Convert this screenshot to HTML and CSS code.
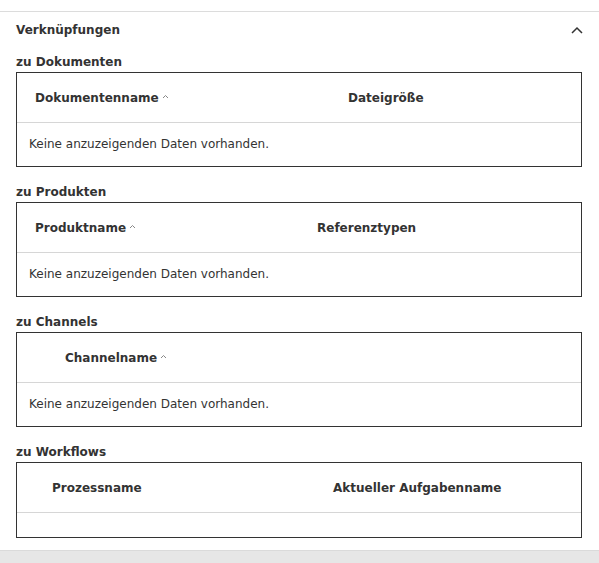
FILE: index.html
```html
<!DOCTYPE html>
<html lang="de">
<head>
<meta charset="utf-8">
<title>Verknüpfungen</title>
<link rel="stylesheet" href="styles.css">
</head>
<body>
<section class="panel">
  <div class="panel-header">
    <span class="panel-title">Verknüpfungen</span>
    <svg class="chevron" width="12" height="8" viewBox="0 0 12 8"><path d="M1 7 L6 2 L11 7" fill="none" stroke="#333" stroke-width="1.5"/></svg>
  </div>
  <div class="panel-body">
    <h3 class="section-title first">zu Dokumenten</h3>
    <div class="table">
      <div class="row head cols-doc">
        <div class="cell pad-a">Dokumentenname<svg class="sort" width="7" height="5" viewBox="0 0 7 5"><path d="M1 4 L3.5 1.5 L6 4" fill="none" stroke="#888" stroke-width="1"/></svg></div>
        <div class="cell">Dateigröße</div>
      </div>
      <div class="row body"><div class="empty">Keine anzuzeigenden Daten vorhanden.</div></div>
    </div>

    <h3 class="section-title">zu Produkten</h3>
    <div class="table">
      <div class="row head cols-prod">
        <div class="cell pad-a">Produktname<svg class="sort" width="7" height="5" viewBox="0 0 7 5"><path d="M1 4 L3.5 1.5 L6 4" fill="none" stroke="#888" stroke-width="1"/></svg></div>
        <div class="cell">Referenztypen</div>
      </div>
      <div class="row body"><div class="empty">Keine anzuzeigenden Daten vorhanden.</div></div>
    </div>

    <h3 class="section-title">zu Channels</h3>
    <div class="table">
      <div class="row head cols-chan">
        <div class="cell pad-c">Channelname<svg class="sort" width="7" height="5" viewBox="0 0 7 5"><path d="M1 4 L3.5 1.5 L6 4" fill="none" stroke="#888" stroke-width="1"/></svg></div>
      </div>
      <div class="row body"><div class="empty">Keine anzuzeigenden Daten vorhanden.</div></div>
    </div>

    <h3 class="section-title">zu Workflows</h3>
    <div class="table">
      <div class="row head cols-wf">
        <div class="cell pad-w">Prozessname</div>
        <div class="cell">Aktueller Aufgabenname</div>
      </div>
      <div class="row body blank"></div>
    </div>
  </div>
</section>
<div class="footer-bar"></div>
</body>
</html>
```

FILE: styles.css
```css
* { box-sizing: border-box; }
html, body { margin: 0; padding: 0; background: #fff; }
body {
  font-family: "DejaVu Sans", "Noto Sans", sans-serif;
  font-size: 12px;
  color: #333;
  overflow: hidden;
}
.panel {
  margin-top: 11px;
  border-top: 1px solid #dcdcdc;
}
.panel-header {
  height: 36px;
  display: flex;
  align-items: center;
  justify-content: space-between;
  padding: 0 16px 0 16px;
}
.panel-title {
  font-weight: bold;
  line-height: 15px;
}
.chevron { display: block; margin-top: -1px; }
.panel-body {
  padding: 0 17px 0 16px;
}
.section-title {
  margin: 18px 0 2px 0;
  font-size: 12px;
  font-weight: bold;
  line-height: 15px;
}
.section-title.first { margin-top: 7px; }
.table {
  border: 1px solid #333;
}
.row {
  border-bottom: 1px solid #d6d6d6;
}
.row:last-child { border-bottom: none; }
.head {
  display: grid;
  height: 50px;
  padding-top: 2px;
  align-items: center;
  font-weight: bold;
}
.cols-doc { grid-template-columns: 331px 1fr; }
.cols-prod { grid-template-columns: 300px 1fr; }
.cols-chan { grid-template-columns: 1fr; }
.cols-wf { grid-template-columns: 316px 1fr; }
.cell {
  display: flex;
  align-items: center;
  line-height: 15px;
  white-space: nowrap;
}
.pad-a { padding-left: 18px; }
.pad-c { padding-left: 48px; }
.pad-w { padding-left: 35px; }
.sort { margin-left: 3px; margin-top: -4px; }
.body {
  height: 43px;
  display: flex;
  align-items: center;
  padding-left: 12px;
}
.body.blank { height: 24px; }
.empty { line-height: 15px; }
.footer-bar {
  margin-top: 12px;
  height: 40px;
  background: #e6e6e6;
  border-top: 1px solid #dadada;
}
```
